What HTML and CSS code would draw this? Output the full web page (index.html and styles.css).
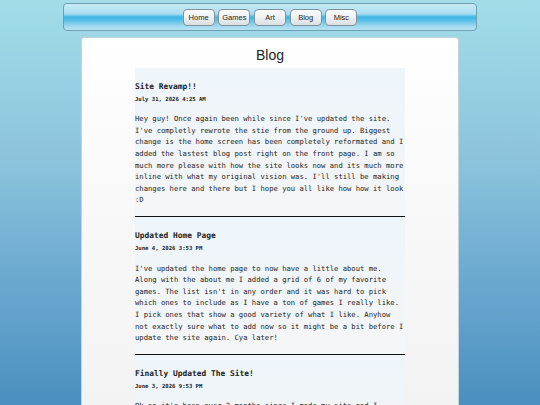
FILE: index.html
```html
<!DOCTYPE html>
<html>
<head>
<meta charset="utf-8">
<link rel="stylesheet" href="styles.css">
</head>
<body>
<nav class="navbar">
  <a class="navbtn">Home</a>
  <a class="navbtn">Games</a>
  <a class="navbtn">Art</a>
  <a class="navbtn">Blog</a>
  <a class="navbtn">Misc</a>
</nav>
<main class="card">
  <h1 class="page-title">Blog</h1>
  <section class="posts">
    <article class="post">
      <h2 class="post-title">Site Revamp!!</h2>
      <div class="post-date">July 31, 2026 4:25 AM</div>
      <p class="post-body">Hey guy! Once again been while since I've updated the site. I've completly rewrote the stie from the ground up. Biggest change is the home screen has been completely reformated and I added the lastest blog post right on the front page. I am so much more please with how the site looks now and its much more inline with what my original vision was. I'll still be making changes here and there but I hope you all like how how it look :D</p>
    </article>
    <article class="post">
      <h2 class="post-title">Updated Home Page</h2>
      <div class="post-date">June 4, 2026 3:53 PM</div>
      <p class="post-body">I've updated the home page to now have a little about me. Along with the about me I added a grid of 6 of my favorite games. The list isn't in any order and it was hard to pick which ones to include as I have a ton of games I really like. I pick ones that show a good variety of what I like. Anyhow not exactly sure what to add now so it might be a bit before I update the site again. Cya later!</p>
    </article>
    <article class="post">
      <h2 class="post-title">Finally Updated The Site!</h2>
      <div class="post-date">June 3, 2026 9:53 PM</div>
      <p class="post-body">Ok so it's been over 2 months since I made my site and I haven't really done much with it. Well today I finally got around to it.</p>
    </article>
  </section>
</main>
</body>
</html>
```
FILE: styles.css
```css
html, body {
  margin: 0;
  padding: 0;
}
body {
  height: 405px;
  overflow: hidden;
  background: linear-gradient(to bottom, #a2dde8 0%, #8cc3dc 40%, #6aa8cf 70%, #4a8fc0 100%);
  font-family: "Liberation Sans", Arial, sans-serif;
}
.navbar {
  box-sizing: border-box;
  width: 414px;
  height: 28px;
  margin: 3px auto 0;
  border: 1px solid #6f9fb4;
  border-radius: 4px;
  background: linear-gradient(to bottom, #c8ebf7 0%, #a9ddf1 38%, #3db5e4 50%, #55bfe8 62%, #9fd8ee 85%, #b8e4f3 100%);
  display: flex;
  justify-content: center;
  align-items: center;
  gap: 3.7px;
  padding-top: 1px;
}
.navbtn {
  box-sizing: border-box;
  width: 32px;
  height: 17px;
  border: 1px solid #7e8f97;
  border-radius: 4px;
  background: linear-gradient(to bottom, #fbfcfc 0%, #eef1f2 50%, #d9dfe2 100%);
  box-shadow: 0 0 1px rgba(255,255,255,0.8);
  font-size: 7.5px;
  color: #222;
  display: flex;
  align-items: center;
  justify-content: center;
}
.card {
  box-sizing: border-box;
  width: 378px;
  margin: 6px auto 0;
  height: 400px;
  border-radius: 3px;
  border: 1px solid #c4d4dc;
  background: linear-gradient(to bottom, #ffffff 0%, #f9f9f9 40%, #f2f2f2 100%);
  padding-top: 8px;
}
.page-title {
  margin: 0;
  text-align: center;
  font-weight: normal;
  font-size: 14px;
  line-height: 18px;
  color: #222;
}
.posts {
  width: 270px;
  margin: 4px auto 0;
  font-family: "DejaVu Sans Mono", monospace;
  color: #222;
}
.post {
  padding-top: 14px;
  padding-bottom: 10.5px;
  border-bottom: 1px solid #111;
  background: linear-gradient(to bottom, #eef5fb 0%, #f1f5f8 60%, #f5f6f7 100%);
}
.post-title {
  margin: 0;
  font-size: 7.9px;
  line-height: 10px;
  font-weight: bold;
}
.post-date {
  margin-top: 3px;
  font-size: 5.6px;
  line-height: 8px;
  font-weight: bold;
}
.post-body {
  margin: 10.2px 0 0;
  font-size: 7.2px;
  line-height: 11.6px;
}
```
